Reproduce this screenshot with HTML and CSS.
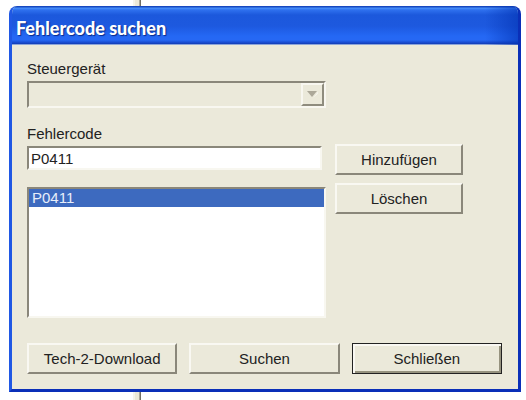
FILE: index.html
```html
<!DOCTYPE html>
<html lang="de">
<head>
<meta charset="utf-8">
<meta name="viewport" content="width=device-width, initial-scale=1">
<title>Fehlercode suchen</title>
<link rel="stylesheet" href="styles.css">
</head>
<body>
<main class="dialog">
  <header class="titlebar"><h1 class="title">Fehlercode suchen</h1></header>
  <form class="content">
    <div class="group">
      <label class="label" for="ecu">Steuergerät</label>
      <div class="combo">
        <select class="combo-select" id="ecu" disabled></select>
        <span class="combo-arrow">
          <svg width="11" height="7" viewBox="0 0 11 7" aria-hidden="true"><path d="M1 6L6 7L11 1V2L6 7Z" fill="#fff"/><path d="M0 0H10L5 6Z" fill="#aca899"/></svg>
        </span>
      </div>
    </div>
    <div class="group">
      <label class="label" for="code">Fehlercode</label>
      <div class="row">
        <div class="field"><input class="text" id="code" type="text" value="P0411"></div>
        <button class="button" type="button">Hinzufügen</button>
      </div>
    </div>
    <div class="row list-row">
      <div class="field">
        <select class="list" size="6" aria-label="Fehlercodes">
          <option class="item" selected>P0411</option>
        </select>
      </div>
      <button class="button" type="button">Löschen</button>
    </div>
    <div class="actions">
      <button class="button" type="button">Tech-2-Download</button>
      <button class="button" type="button">Suchen</button>
      <button class="button default" type="button">Schließen</button>
    </div>
  </form>
</main>
</body>
</html>
```
FILE: styles.css
```css
* {
  box-sizing: border-box;
}

html {
  min-height: 100%;
  background: #fff linear-gradient(90deg, #f5f4ea 0 2px, #ece9d8 2px 6px, #aca899 6px 7px, #716f64 7px 8px) 133px 0 / 8px 100% no-repeat;
}

body {
  margin: 0;
  padding: 6px 5px 8px 9px;
  font: 15px/18px "Liberation Sans", Arial, sans-serif;
  color: #222;
}

.dialog {
  border: 3px solid #1c50d8;
  border-color: #2a66e8 #0a2fb8 #0a2fb8 #2058e4;
  border-top: 0;
  border-radius: 8px 8px 0 0;
  background: #ebe9da;
  overflow: hidden;
}

.titlebar {
  display: flex;
  align-items: center;
  height: 39px;
  margin: 0 -3px;
  padding: 4px 7px 0;
  background:
    linear-gradient(90deg, #0030b000 calc(100% - 36px), #0030b0a0 100%),
    linear-gradient(#1648c0 0 1px, #4a92fa 2px, #2e70ee 4px, #1c58dc 9px, #1d59df 20px, #2468f4 30px, #2668f4 34px, #1646c8 37px, #123cb0 38px, #8ca4d8 38px);
}

.title {
  margin: 0;
  font: 900 18px/24px Lato, "Open Sans", sans-serif;
  color: #fff;
  text-shadow: 1px 1px 1px #0a2a88;
}

.content {
  padding: 15px 16px 15px 15px;
}

.group {
  margin-bottom: 17px;
  padding-right: 39px;
}

.label {
  display: block;
  margin-bottom: 3px;
}

.combo,
.field {
  border: 2px solid;
  border-color: #8a877a #f8f7f0 #f8f7f0 #8a877a;
}

.combo {
  display: flex;
  height: 27px;
  margin-right: 137px;
}

.combo-select {
  flex: 1;
  min-width: 0;
  border: 0;
  appearance: none;
  background: #ebe9da;
  opacity: 1;
}

.combo-arrow {
  display: grid;
  place-items: center;
  width: 23px;
  border: 2px solid;
  border-color: #f8f7f0 #8f8c7e #8f8c7e #f8f7f0;
}

.row {
  display: flex;
  align-items: flex-start;
  gap: 9px;
}

.row .field {
  flex: 1;
  min-width: 0;
}

.row .button {
  flex: 0 0 128px;
}

.group .row {
  margin-top: -2px;
}

.group .row .field {
  margin: 2px 4px 0 0;
}

.text {
  display: block;
  width: 100%;
  height: 20px;
  padding: 0 2px;
  border: 0;
  background: #fff;
  font: inherit;
  color: inherit;
}

.list-row {
  margin-top: -9px;
  padding-right: 39px;
}

.list-row .field {
  margin-top: 4px;
}

.list {
  display: block;
  width: 100%;
  height: 127px;
  padding: 0;
  border: 0;
  border-radius: 0;
  outline: 0;
  background: #fff;
  font: inherit;
  overflow: hidden;
}

.item {
  min-height: 18px;
  padding: 0 3px;
}

.item:checked {
  background: #3d6abf linear-gradient(#3d6abf, #3d6abf);
  color: #fff;
  -webkit-text-fill-color: #e8eefa;
}

.button {
  height: 31px;
  padding: 0 4px;
  border: 2px solid;
  border-color: #f9f8f2 #8a877a #8a877a #f9f8f2;
  border-radius: 0;
  background: #ebe9da;
  font: inherit;
  color: inherit;
}

.actions {
  display: grid;
  grid-template-columns: repeat(3, 1fr);
  gap: 12px;
  margin-top: 25px;
}

.default {
  border: 1px solid #222;
  box-shadow: inset 2px 2px #f9f8f2, inset -2px -2px #96937f;
}
```
